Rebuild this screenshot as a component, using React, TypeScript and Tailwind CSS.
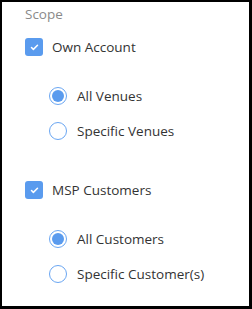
import { Check } from "lucide-react";

const groups = [
  { label: "Own Account", options: ["All Venues", "Specific Venues"] },
  { label: "MSP Customers", options: ["All Customers", "Specific Customer(s)"] },
];

function Checkbox() {
  return (
    <span className="flex h-[18px] w-[18px] shrink-0 items-center justify-center rounded-[3px] bg-[#5a9bee]">
      <Check size={9} strokeWidth={4} className="text-white" />
    </span>
  );
}

function Radio({ checked }: { checked: boolean }) {
  return (
    <span className="flex h-[18px] w-[18px] shrink-0 items-center justify-center rounded-full border border-[#6aa6f2] bg-white">
      {checked && <span className="h-[12px] w-[12px] rounded-full bg-[#5a9bee]" />}
    </span>
  );
}

export default function App() {
  return (
    <div className="h-[309px] w-[252px] border-t-2 border-l-2 border-r-[3px] border-b-[3px] border-black bg-white font-['Open_Sans',sans-serif]">
      <div className="pl-[23px] pt-[2px]">
        <p className="text-[13.5px] leading-[20px] text-[#8a8a8a]">Scope</p>
        {groups.map((g, gi) => (
          <div key={g.label} className={gi === 0 ? "mt-[14px]" : "mt-[41px]"}>
            <label className="flex h-[18px] items-center gap-[9px]">
              <Checkbox />
              <span className="text-[13.5px] text-[#333]">{g.label}</span>
            </label>
            <div className="ml-[24px] mt-[31px] flex flex-col gap-[17px]">
              {g.options.map((o, i) => (
                <label key={o} className="flex h-[18px] items-center gap-[10px]">
                  <Radio checked={i === 0} />
                  <span className="text-[13.5px] text-[#333]">{o}</span>
                </label>
              ))}
            </div>
          </div>
        ))}
      </div>
    </div>
  );
}
